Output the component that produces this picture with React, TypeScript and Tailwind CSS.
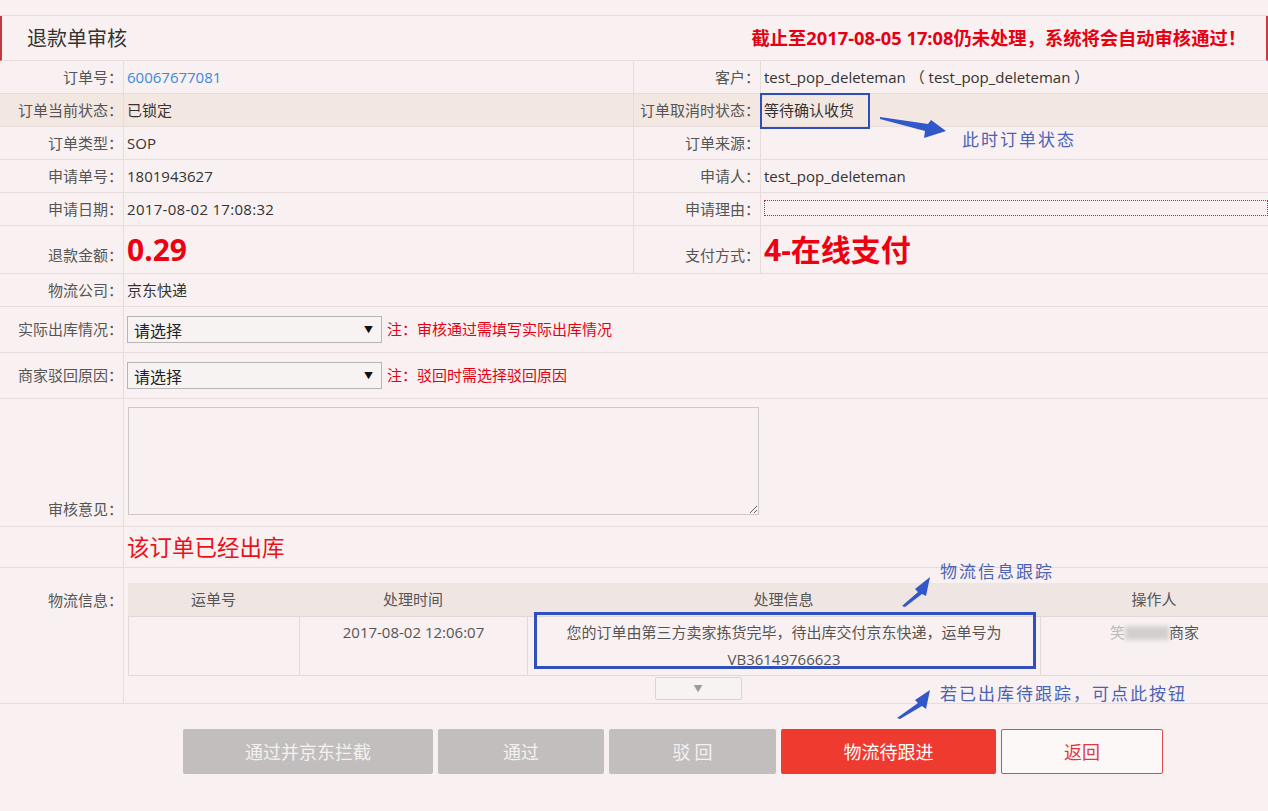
import React from "react";

const line = "border-[#e7dcdc]";

function Label({ children, className = "" }: { children: React.ReactNode; className?: string }) {
  return (
    <div className={`w-[124px] shrink-0 flex justify-end border-r ${line} text-[15px] text-[#555] ${className}`}>
      {children}
    </div>
  );
}

function RLabel({ children, className = "" }: { children: React.ReactNode; className?: string }) {
  return (
    <div className={`w-[127px] shrink-0 flex justify-end border-r ${line} text-[15px] text-[#555] ${className}`}>
      {children}
    </div>
  );
}

function Select() {
  return (
    <div className="w-[255px] h-[27px] border border-[#b9b4b4] bg-[#f7f3f3] flex items-center justify-between pl-[6px] pr-[8px]">
      <span className="text-[16px] text-[#222] mt-[2px]">请选择</span>
      <span className="text-[9px] text-[#111]">▼</span>
    </div>
  );
}

export default function App() {
  return (
    <div className="relative w-[1268px] h-[811px] overflow-hidden bg-[#f9f1f1] font-['Open_Sans','Noto_Sans_CJK_SC',sans-serif] text-[#333]">
      <div className={`h-[16px] border-b ${line}`} />
      {/* header */}
      <div className={`h-[45px] flex items-center justify-between border-b ${line} border-l-2 border-l-[#c4393d] border-r-2 border-r-[#d0393d]`}>
        <div className="pl-[25px] text-[20px] text-[#333] font-['Noto_Sans_CJK_SC',sans-serif]">退款单审核</div>
        <div className="pr-[20px] text-[18.3px] font-bold text-[#e60012]">截止至2017-08-05 17:08仍未处理，系统将会自动审核通过！</div>
      </div>

      {/* row 1 */}
      <div className={`flex h-[33px] border-b ${line} text-[15px]`}>
        <Label className="items-center">订单号：</Label>
        <div className={`w-[510px] shrink-0 border-r ${line} pl-[3px] flex items-center text-[#3d8ad8]`}>60067677081</div>
        <RLabel className="items-center">客户：</RLabel>
        <div className="flex-1 pl-[3px] flex items-center text-[#333]">test_pop_deleteman （ test_pop_deleteman ）</div>
      </div>
      {/* row 2 */}
      <div className={`flex h-[33px] border-b ${line} text-[15px] bg-[#f3e7e2]`}>
        <Label className="items-center">订单当前状态：</Label>
        <div className={`w-[510px] shrink-0 border-r ${line} pl-[3px] flex items-center`}>已锁定</div>
        <RLabel className="items-center">订单取消时状态：</RLabel>
        <div className="flex-1 pl-[3px] flex items-center">等待确认收货</div>
      </div>
      {/* row 3 */}
      <div className={`flex h-[33px] border-b ${line} text-[15px]`}>
        <Label className="items-center">订单类型：</Label>
        <div className={`w-[510px] shrink-0 border-r ${line} pl-[3px] flex items-center`}>SOP</div>
        <RLabel className="items-center">订单来源：</RLabel>
        <div className="flex-1" />
      </div>
      {/* row 4 */}
      <div className={`flex h-[33px] border-b ${line} text-[15px]`}>
        <Label className="items-center">申请单号：</Label>
        <div className={`w-[510px] shrink-0 border-r ${line} pl-[3px] flex items-center`}>1801943627</div>
        <RLabel className="items-center">申请人：</RLabel>
        <div className="flex-1 pl-[3px] flex items-center">test_pop_deleteman</div>
      </div>
      {/* row 5 */}
      <div className={`flex h-[33px] border-b ${line} text-[15px]`}>
        <Label className="items-center">申请日期：</Label>
        <div className={`w-[510px] shrink-0 border-r ${line} pl-[3px] flex items-center tracking-[0.3px]`}>2017-08-02 17:08:32</div>
        <RLabel className="items-center">申请理由：</RLabel>
        <div className="flex-1 pl-[3px] flex items-center">
          <div className="w-full h-[16px] border border-dotted border-[#a8323a] -mt-[2px]" />
        </div>
      </div>
      {/* row 6 */}
      <div className={`flex h-[48px] border-b ${line} text-[15px]`}>
        <Label className="items-end pb-[7px]">退款金额：</Label>
        <div className={`w-[510px] shrink-0 border-r ${line} pl-[3px] flex items-center text-[30px] font-bold text-[#ec0012]`}>0.29</div>
        <RLabel className="items-end pb-[7px]">支付方式：</RLabel>
        <div className="flex-1 pl-[3px] flex items-center text-[30px] font-bold text-[#ec0012]">4-在线支付</div>
      </div>
      {/* row 7 */}
      <div className={`flex h-[33px] border-b ${line} text-[15px]`}>
        <Label className="items-center">物流公司：</Label>
        <div className="flex-1 pl-[3px] flex items-center">京东快递</div>
      </div>
      {/* row 8 */}
      <div className={`flex h-[46px] border-b ${line} text-[15px]`}>
        <Label className="items-center">实际出库情况：</Label>
        <div className="flex-1 pl-[3px] flex items-center gap-[5px]">
          <Select />
          <span className="text-[#e60012]">注：审核通过需填写实际出库情况</span>
        </div>
      </div>
      {/* row 9 */}
      <div className={`flex h-[46px] border-b ${line} text-[15px]`}>
        <Label className="items-center">商家驳回原因：</Label>
        <div className="flex-1 pl-[3px] flex items-center gap-[5px]">
          <Select />
          <span className="text-[#e60012]">注：驳回时需选择驳回原因</span>
        </div>
      </div>
      {/* row 10 */}
      <div className={`flex h-[128px] border-b ${line} text-[15px]`}>
        <Label className="items-end pb-[6px]">审核意见：</Label>
        <div className="flex-1 pl-[4px] pt-[8px]">
          <textarea className="block w-[631px] h-[108px] border border-[#cfc8c8] bg-transparent outline-none resize" />
        </div>
      </div>
      {/* row 11 */}
      <div className={`flex h-[41px] border-b ${line}`}>
        <Label>{""}</Label>
        <div className="flex-1 pl-[3px] flex items-center text-[22.5px] text-[#e8121b] font-['Noto_Sans_CJK_SC',sans-serif]">该订单已经出库</div>
      </div>
      {/* row 12 */}
      <div className={`flex h-[136px] border-b ${line} text-[15px]`}>
        <Label className="items-start pt-[21px]">物流信息：</Label>
        <div className="flex-1 pl-[4px] pt-[15px]">
          <div className="w-full">
            <div className="flex h-[34px] bg-[#efe6e4] border-b border-[#e2d8d8] text-[#555] items-center">
              <div className="w-[171px] text-center">运单号</div>
              <div className="w-[228px] text-center">处理时间</div>
              <div className="w-[513px] text-center">处理信息</div>
              <div className="flex-1 text-center">操作人</div>
            </div>
            <div className="flex h-[59px] border-l border-b border-[#e2d8d8] text-[#555]">
              <div className="w-[171px] border-r border-[#e2d8d8]" />
              <div className="w-[228px] border-r border-[#e2d8d8] text-center pt-[2px] leading-[27px]">2017-08-02 12:06:07</div>
              <div className="w-[513px] border-r border-[#e2d8d8] text-center pt-[2px] leading-[27px] px-[16px]">
                您的订单由第三方卖家拣货完毕，待出库交付京东快递，运单号为<br />VB36149766623
              </div>
              <div className="flex-1 text-center pt-[2px] leading-[27px] flex justify-center items-start">
                <span className="text-[#bbb]">笑</span>
                <span className="inline-block w-[44px] h-[14px] mt-[7px] bg-[#d4cfcf] blur-[2px]" />
                <span>商家</span>
              </div>
            </div>
            <div className="flex justify-center pt-[1px]">
              <div className="w-[87px] h-[23px] border border-[#dcd4d4] rounded-[2px] bg-[#f8f3f3] flex items-center justify-center text-[9px] text-[#9a9a9a]">▼</div>
            </div>
          </div>
        </div>
      </div>

      {/* buttons */}
      <div className="flex pl-[183px] pt-[25px] gap-[5px] text-[18px] font-['Noto_Sans_CJK_SC',sans-serif]">
        <div className="w-[250px] h-[45px] rounded-[2px] bg-[#c2bebd] text-[#f4f1f1] flex items-center justify-center">通过并京东拦截</div>
        <div className="w-[166px] h-[45px] rounded-[2px] bg-[#c2bebd] text-[#f4f1f1] flex items-center justify-center">通过</div>
        <div className="w-[167px] h-[45px] rounded-[2px] bg-[#c2bebd] text-[#f4f1f1] flex items-center justify-center">驳 回</div>
        <div className="w-[215px] h-[45px] rounded-[2px] bg-[#ee3a2f] text-white flex items-center justify-center">物流待跟进</div>
        <div className="w-[162px] h-[45px] rounded-[2px] border border-[#e04a4f] bg-[#fdf8f8] text-[#e0383e] flex items-center justify-center">返回</div>
      </div>

      {/* annotation overlays */}
      <div className="absolute left-[760px] top-[93px] w-[110px] h-[36px] border-2 border-[#2f4fb8]" />
      <div className="absolute left-[534px] top-[612px] w-[502px] h-[57px] border-[3px] border-[#3050bd]" />
      <div className="absolute left-[962px] top-[126px] text-[17px] tracking-[2px] text-[#4a62b4] font-['Noto_Sans_CJK_SC',sans-serif]">此时订单状态</div>
      <div className="absolute left-[940px] top-[558px] text-[17px] tracking-[2px] text-[#4a62b4] font-['Noto_Sans_CJK_SC',sans-serif]">物流信息跟踪</div>
      <div className="absolute left-[940px] top-[680px] text-[17px] tracking-[2px] text-[#4a62b4] font-['Noto_Sans_CJK_SC',sans-serif]">若已出库待跟踪，可点此按钮</div>
      <svg className="absolute left-0 top-0 pointer-events-none" width="1268" height="811" viewBox="0 0 1268 811">
        <polygon points="880,117 928,124 931,120 946,131 924,138 925,131 880,119" fill="#3157c9" />
        <polygon points="902,606 918,592 915,589 930,577 926,596 922,594 905,607" fill="#3157c9" />
        <polygon points="897,718 918,703 915,700 930,690 926,709 922,706 900,719" fill="#3157c9" />
      </svg>
    </div>
  );
}
